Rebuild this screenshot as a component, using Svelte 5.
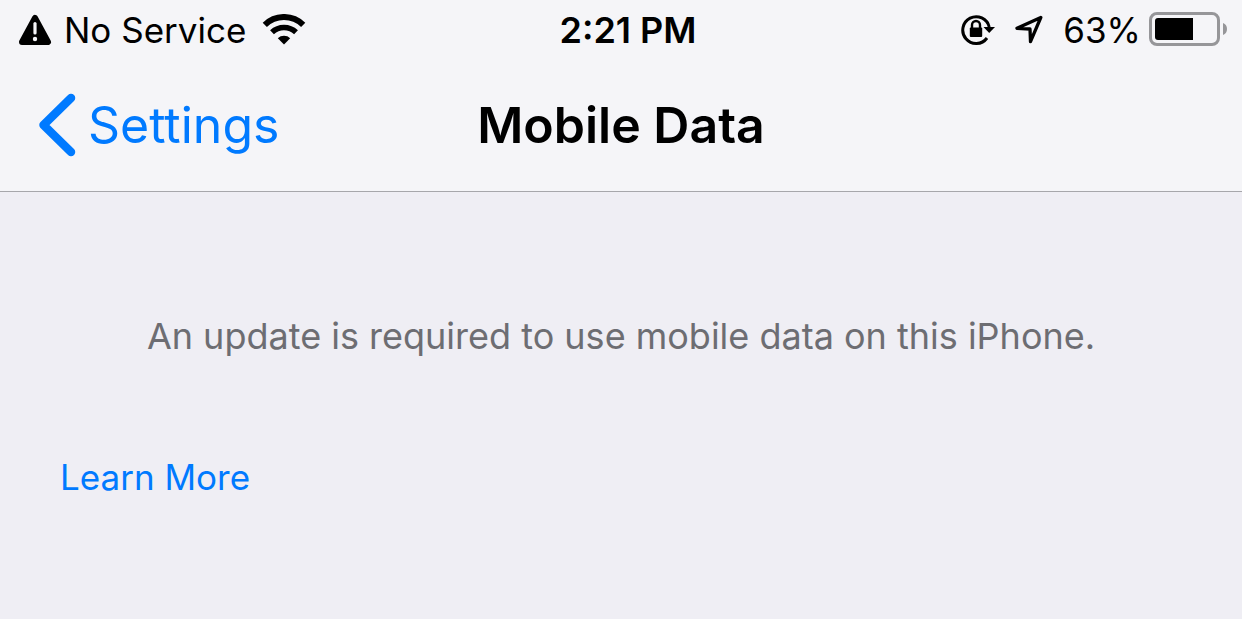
<script>
  const time = '2:21 PM';
  const carrier = 'No Service';
  const battery = 63;
</script>

<div class="screen">
  <header>
    <div class="status">
      <div class="group">
        <svg class="alert" width="34" height="32" viewBox="0 0 34 32" aria-hidden="true">
          <path d="M17 4 L30 28 H4 Z" fill="#000" stroke="#000" stroke-width="6" stroke-linejoin="round" />
          <path d="M17 9.500 V19" stroke="#f5f5f8" stroke-width="3.200" stroke-linecap="round" />
          <circle cx="17" cy="25" r="2.200" fill="#f5f5f8" />
        </svg>
        <span>{carrier}</span>
        <svg class="wifi" width="44" height="32" viewBox="0 0 44 32" aria-hidden="true">
          <path d="M2.800 10.800 A27.500 27.500 0 0 1 41.200 10.800" fill="none" stroke="#000" stroke-width="6" />
          <path d="M10 18.200 A17.500 17.500 0 0 1 34 18.200" fill="none" stroke="#000" stroke-width="5.600" />
          <path d="M22 30.500 L15.800 24.300 A9 9 0 0 1 28.200 24.300 Z" />
        </svg>
      </div>
      <time>{time}</time>
      <div class="group end">
        <svg class="lock" width="34" height="32" viewBox="0 1 34 32" aria-hidden="true">
          <path d="M26 25 A13.400 13.400 0 1 1 28.200 14" fill="none" stroke="#000" stroke-width="3" />
          <path d="M22.500 14 H34 L28.200 20 Z" />
          <path d="M11 15 V12 A4 4 0 0 1 19 12 V15" fill="none" stroke="#000" stroke-width="2.400" />
          <rect x="8.800" y="14.500" width="12.400" height="9.500" rx="1" />
        </svg>
        <svg class="arrow" width="28" height="32" viewBox="0 0 28 32" aria-hidden="true">
          <path d="M25.800 3.500 L2 14.300 L15 15 L15.500 27.700 Z" fill="none" stroke="#000" stroke-width="3.300" stroke-linejoin="round" />
        </svg>
        <div class="charge">
          <span>{battery}%</span>
          <svg class="battery" width="78" height="34" viewBox="0 0 78 34" aria-hidden="true">
            <rect x="1.500" y="1.500" width="68" height="31" rx="6.500" fill="none" stroke="#969699" stroke-width="3" />
            <path d="M9 6 H44 V28 H9 Q6 28 6 25 V9 Q6 6 9 6 Z" />
            <path d="M74 11 Q78 12.500 78 17 T74 23 Z" fill="#969699" />
          </svg>
        </div>
      </div>
    </div>
    <nav>
      <button type="button">
        <svg width="38" height="64" viewBox="0 0 38 64" aria-hidden="true">
          <path d="M33 5 L5.500 32 L33 59" fill="none" stroke="#007aff" stroke-width="8.500" stroke-linecap="round" stroke-linejoin="round" />
        </svg>
        <span>Settings</span>
      </button>
      <h1>Mobile Data</h1>
    </nav>
  </header>
  <main>
    <p>An update is required to use mobile data on this iPhone.</p>
    <a href="#learn-more">Learn More</a>
  </main>
</div>

<style>
  :global(body) {
    margin: 0;
    background: #efeef4;
  }
  .screen {
    min-height: 100vh;
    background: #efeef4;
    color: #000;
    font-family: Inter, "Liberation Sans", sans-serif;
    font-size: 36px;
    line-height: 44px;
  }
  header {
    background: #f5f5f8;
    border-bottom: 1px solid #a7a7ab;
  }
  .status {
    display: grid;
    grid-template-columns: 1fr auto 1fr;
    align-items: center;
    height: 60px;
    padding: 0 4px 0 18px;
  }
  .group {
    display: flex;
    align-items: center;
    gap: 12px;
    font-size: 35px;
    white-space: nowrap;
  }
  .end {
    justify-content: flex-end;
    gap: 20px;
    padding-right: 11px;
  }
  .charge {
    display: flex;
    align-items: center;
    gap: 8px;
  }
  svg {
    display: block;
    flex: none;
  }
  .wifi {
    margin-left: 4px;
  }
  .battery {
    margin-bottom: 2px;
  }
  time {
    font-weight: 600;
  }
  nav {
    display: grid;
    grid-template-columns: 1fr auto 1fr;
    align-items: center;
    height: 131px;
    padding: 0 38px 2px;
    box-sizing: border-box;
  }
  button {
    display: flex;
    align-items: center;
    justify-self: start;
    gap: 12px;
    padding: 0;
    border: 0;
    background: none;
    color: #007aff;
    font: inherit;
    font-size: 50px;
    line-height: 64px;
  }
  h1 {
    margin: 0;
    font-size: 50px;
    line-height: 64px;
    font-weight: 600;
  }
  main {
    padding: 122px 60px 60px;
  }
  p {
    margin: 0 0 97px;
    text-align: center;
    color: #6d6d72;
  }
  a {
    display: inline-block;
    color: #007aff;
    font-size: 35px;
    text-decoration: none;
  }
</style>
